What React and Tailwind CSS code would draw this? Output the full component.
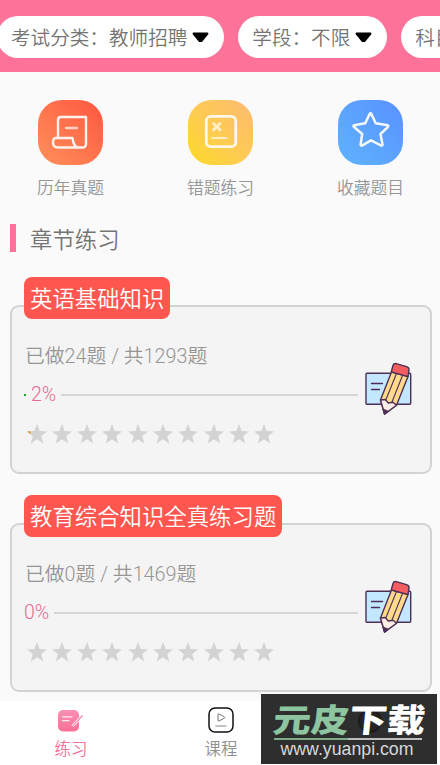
import React from 'react';

const filters = ['考试分类：教师招聘', '学段：不限', '科目：英语'];

const chapters = [
  { id: 1, title: '英语基础知识', done: 24, total: 1293, percent: 2 },
  { id: 2, title: '教育综合知识全真练习题', done: 0, total: 1469, percent: 0 },
];

const STAR_PATH = 'M10 0 L12.6 7 L20 7.4 L14.2 12 L16.2 19.4 L10 15.3 L3.8 19.4 L5.8 12 L0 7.4 L7.4 7 Z';

const PaperIcon = () => (
  <svg width="65" height="65" viewBox="0 0 65 65" fill="none">
    <g stroke="#fff2ec" strokeWidth="2.4" strokeLinejoin="round" strokeLinecap="round">
      <path d="M20 37.5 V20 Q20 17 23 17 H48 V44 Q48 47.5 44 47.5 H20 Q15 47.5 15 42.5 Q15 38 18 38 H34.5 Q35.5 47.5 41 47.5" />
      <path d="M28 28 H39" opacity="0.75" />
    </g>
  </svg>
);

const WrongIcon = () => (
  <svg width="65" height="65" viewBox="0 0 65 65" fill="none">
    <g stroke="#fff8e8" strokeLinecap="round">
      <rect x="18.3" y="16.3" width="29.4" height="30.4" rx="4.5" strokeWidth="2.8" />
      <path d="M25.5 23.5 L32 30 M32 23.5 L25.5 30" strokeWidth="3" opacity="0.75" />
      <path d="M24 38 H38.5" strokeWidth="2" opacity="0.75" />
    </g>
  </svg>
);

const FavoriteIcon = () => (
  <svg width="65" height="65" viewBox="0 0 65 65" fill="none">
    <path
      d="M31.6 14 Q32.5 12.5 33.4 14 L37.7 23.3 L49.5 25.2 Q50.8 25.7 50 26.8 L42.5 34 L44.5 44.5 Q44.5 46 43 45.5 L33 40.3 L24 45.6 Q22.6 46 22.6 44.5 L24.2 34 L15.8 26.8 Q15 25.7 16.3 25.2 L27.3 23.3 Z"
      stroke="#f3f8ff"
      strokeWidth="2.5"
      strokeLinejoin="round"
    />
  </svg>
);

const shortcuts = [
  { label: '历年真题', icon: <PaperIcon />, color: 'bg-linear-to-tr from-[#ff8f5b] to-[#ff5440]' },
  { label: '错题练习', icon: <WrongIcon />, color: 'bg-linear-to-tr from-[#fdda1b] to-[#fdba70]' },
  { label: '收藏题目', icon: <FavoriteIcon />, color: 'bg-linear-to-tr from-[#60b4ff] to-[#5890fe]' },
];

const PencilNote = () => (
  <svg width="48" height="54" viewBox="0 0 48 54" className="shrink-0">
    <g stroke="#4d2f55" strokeWidth="1.4" strokeLinejoin="round" strokeLinecap="round">
      <rect x="2" y="11.3" width="44.7" height="31" rx="1" fill="#c3e7ff" />
      <path d="M7.5 21.5 H18.5 M7.5 27.5 H15.5" fill="none" />
      <path d="M27.5 10 L16.5 38 L20.6 52 L32.5 43.3 L44 14.5 Z" fill="#ffda8c" />
      <path d="M32.3 12 L22 37.5 M38.3 14 L27.8 40.5" fill="none" strokeWidth="1.1" />
      <path d="M16.5 38 L21.2 37.5 L24.3 41 L29 40.3 L32.5 43.3 L20.6 52 Z" fill="#ffeee7" />
      <path d="M19.3 47.5 L20.6 52 L24 49.5 Z" fill="#4d2f55" />
      <path d="M27.3 9.8 L29 3.5 Q29.8 1.2 32.2 1.6 L42.5 4.6 Q45.4 5.5 45 8 L44 14.6 Z" fill="#f45d60" />
    </g>
  </svg>
);

const Stars = ({ percent }) => (
  <div className="flex gap-[5.3px]">
    {Array.from({ length: 10 }, (_, i) => (
      <svg key={i} width="20" height="20" viewBox="0 0 20 20">
        <path d={STAR_PATH} fill="#d3d3d3" />
        {i === 0 && percent > 0 && <path d="M0 7.4 L3.6 7.2 V10.3 Z" fill="#e3953f" />}
      </svg>
    ))}
  </div>
);

const ChapterCard = ({ chapter }) => (
  <section className="h-[169px] rounded-[9px] border-2 border-[#d3d3d3] bg-[#f4f4f4] pl-3">
    <h3 className="-mt-[30px] flex h-[42px] w-fit items-center whitespace-nowrap rounded-[8px] bg-[#ff574f] px-[6px] pt-[2px] text-[22.4px] leading-none font-[350] text-white">
      {chapter.title}
    </h3>
    <div className="mt-[23px] flex h-[110px]">
      <div className="flex w-[334px] flex-col">
        <p className="ml-px h-[30px] whitespace-nowrap text-[19.8px] leading-[30px] font-[350] text-[#969696]">
          已做{chapter.done}题 / 共{chapter.total}题
        </p>
        <div className="mt-[8px] flex h-[30px] items-center">
          {chapter.percent > 0 && <span className="mr-[5px] h-[2px] w-[2px] bg-[#20a52a]"></span>}
          <span className="mr-[5px] text-[19.5px] font-[350] text-[#e86a94]">{chapter.percent}%</span>
          <span className="h-[2px] flex-1 bg-[#d6d6d6]"></span>
        </div>
        <div className="mt-[14px] ml-[2.5px]">
          <Stars percent={chapter.percent} />
        </div>
      </div>
      <div className="mt-[20px] ml-[6px]">
        <PencilNote />
      </div>
    </div>
  </section>
);

const Watermark = () => (
  <div className="absolute right-[3px] bottom-px h-[70px] w-[176px] overflow-hidden bg-[#2e2e2e]">
    <div className="absolute top-[15px] left-[97px] h-6 w-6 rounded-full border-2 border-[#1c1c1c] bg-[#242424]"></div>
    <svg width="176" height="70" viewBox="0 0 176 70" className="relative">
      <g transform="skewX(-6)" fontFamily="'Noto Sans CJK SC', sans-serif" fontSize="32.5" fontWeight="900">
        <text x="15" y="38.5" fill="#8cc5a0" textLength="76" lengthAdjust="spacingAndGlyphs">元皮</text>
        <text x="91" y="38.5" fill="#ffffff" textLength="76" lengthAdjust="spacingAndGlyphs">下载</text>
      </g>
      <path d="M13 45 H87" stroke="#7ead8c" strokeWidth="2" />
      <path d="M87 45 H161" stroke="#bdbdbd" strokeWidth="2" />
      <text x="19.5" y="60.5" fill="#d8d8d8" fontFamily="'Liberation Sans', sans-serif" fontSize="17.6" textLength="133" lengthAdjust="spacingAndGlyphs">
        www.yuanpi.com
      </text>
    </svg>
  </div>
);

const App = () => {
  return (
    <div className="relative flex h-[765px] w-[440px] flex-col overflow-hidden bg-[#fafafa] font-['Roboto','Noto_Sans_CJK_SC',sans-serif]">
      {/* Filters */}
      <header className="flex h-[72px] shrink-0 gap-[14px] overflow-hidden bg-[#fc7298] pt-4">
        {filters.map((filter, i) => (
          <button
            key={filter}
            className={`flex h-[42px] shrink-0 items-center rounded-full bg-white pr-[15px] pl-[14px] text-[19.6px] font-[350] text-[#747474] ${
              i === 0 ? '-ml-[3px]' : ''
            }`}
          >
            <span className="mt-[4px] whitespace-nowrap">{filter}</span>
            <svg width="17" height="11" viewBox="0 0 17 11" className="ml-[5px]">
              <path d="M1 0.5 H16 L16.5 2 L10 10 H7 L0.5 2 Z" fill="#000" />
            </svg>
          </button>
        ))}
      </header>

      {/* Shortcuts */}
      <div className="flex shrink-0 justify-between pt-7 pr-[36px] pl-[37px]">
        {shortcuts.map((item) => (
          <div key={item.label} className="flex w-[67px] flex-col items-center">
            <div className={`h-[65px] w-[65px] rounded-[24px] ${item.color}`}>{item.icon}</div>
            <span className="mt-[11px] whitespace-nowrap text-[16.8px] leading-6 font-[350] text-[#969696]">{item.label}</span>
          </div>
        ))}
      </div>

      {/* Section title */}
      <div className="mt-[24px] ml-[10px] flex h-7 shrink-0 items-center">
        <span className="h-7 w-[6px] bg-[#fc7298]"></span>
        <h2 className="ml-[14px] mt-[4px] text-[22.4px] leading-7 font-[350] text-[#747474]">章节练习</h2>
      </div>

      {/* Chapters */}
      <main className="mt-[53px] flex flex-1 flex-col gap-[49px] pr-2 pl-[10px]">
        {chapters.map((chapter) => (
          <ChapterCard key={chapter.id} chapter={chapter} />
        ))}
      </main>

      {/* Bottom tabs */}
      <nav className="flex h-16 shrink-0 bg-white">
        <div className="flex w-[142px] flex-col items-center pt-[7px]">
          <svg width="28" height="26" viewBox="0 0 28 26">
            <defs>
              <linearGradient id="tabPink" x1="0" y1="0" x2="0" y2="1">
                <stop offset="0" stopColor="#fb91b1" />
                <stop offset="1" stopColor="#fb6f98" />
              </linearGradient>
            </defs>
            <rect x="1" y="2" width="21" height="21.5" rx="5" fill="url(#tabPink)" />
            <path d="M5.5 8.8 H15 M5.5 12.7 H12" stroke="#fff0f5" strokeWidth="1.3" strokeLinecap="round" />
            <path d="M15.5 18.2 L25.5 7.5" stroke="#fff" strokeWidth="2.6" />
            <path d="M15.5 18.2 L25.5 7.5" stroke="#f589a9" strokeWidth="1.2" />
          </svg>
          <span className="mt-[4px] text-[16.5px] leading-6 font-[350] text-[#f2729a]">练习</span>
        </div>
        <div className="flex w-[158px] flex-col items-center pt-[6px]">
          <svg width="26" height="26" viewBox="0 0 26 26" fill="none" className="-ml-px">
            <rect x="1" y="1" width="24" height="24" rx="6" stroke="#111" strokeWidth="1.5" />
            <path d="M10 7.5 Q10 6.5 11 7 L16.3 9.8 Q17.3 10.5 16.3 11.2 L11 14 Q10 14.3 10 13.3 Z" stroke="#777" />
            <path d="M7.5 19 H18.5" stroke="#888" />
          </svg>
          <span className="mt-[5px] text-[16.5px] leading-6 font-[350] text-[#909090]">课程</span>
        </div>
      </nav>

      <Watermark />
    </div>
  );
};

export default App;
